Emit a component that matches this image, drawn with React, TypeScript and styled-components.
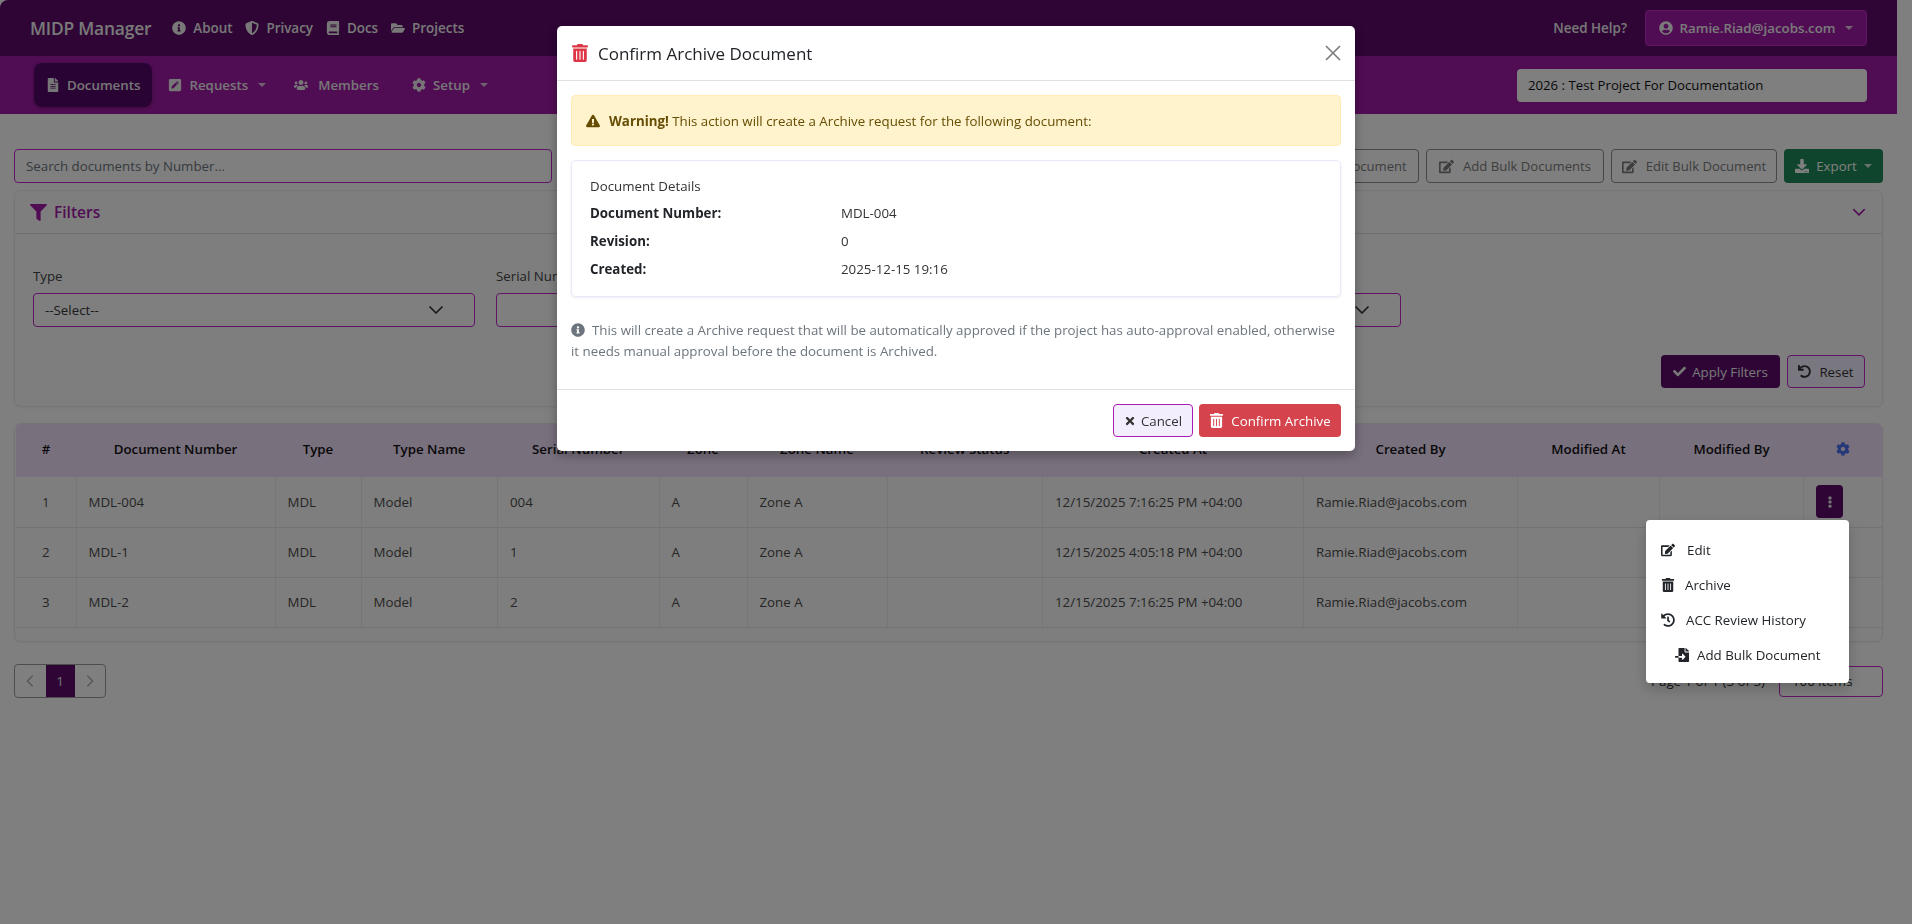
import React from "react";
import styled, { createGlobalStyle } from "styled-components";
import {
  FaInfoCircle, FaShieldAlt, FaBook, FaFolderOpen, FaFileAlt, FaPenSquare, FaUsers, FaCog,
  FaUserCircle, FaFilter, FaDownload, FaEdit, FaTrashAlt, FaExclamationTriangle, FaTimes,
  FaCheck, FaUndo, FaEllipsisV, FaHistory, FaFileImport,
} from "react-icons/fa";

const FONT = `"Open Sans", "Noto Sans", "Liberation Sans", sans-serif`;
const PURPLE = "#a31aa8";
const DARK = "#5c0a6a";
const LINE = "#c227cc";

const Global = createGlobalStyle`
  html, body { margin: 0; padding: 0; height: 100%; overflow: hidden; background: #fff; }
  body { font-family: ${FONT}; font-size: 13.3px; color: #212529; }
  * { box-sizing: border-box; }
  svg { height: 1em; width: auto; flex: none; }
`;

const Page = styled.div`
  width: 1897px;
  height: 924px;
`;
const TopBar = styled.header`
  height: 56px;
  background: ${DARK};
  border-top-left-radius: 8px;
  display: flex;
  align-items: center;
  padding: 0 30px;
`;
const Brand = styled.span`
  font-size: 17.4px;
  font-weight: 600;
  color: #f2f2f2;
  letter-spacing: -0.2px;
  margin-right: 21px;
`;
const TopLink = styled.a`
  display: flex;
  align-items: center;
  gap: 7px;
  color: #f0f0f0;
  font-size: 13.4px;
  font-weight: 600;
  margin-right: 13px;
  svg { font-size: 14px; }
`;
const Spacer = styled.div`flex: 1;`;
const Help = styled.span`
  color: #f0f0f0;
  font-weight: 600;
  font-size: 13.4px;
  margin-right: 18px;
`;
const UserButton = styled.button`
  width: 222px;
  height: 36px;
  border: 1px solid #c22cc9;
  border-radius: 4px;
  background: ${PURPLE};
  color: #f4f4f4;
  font: 600 13.3px ${FONT};
  display: flex;
  align-items: center;
  justify-content: center;
  gap: 7px;
  svg { font-size: 14px; }
`;
const Caret = styled.i<{ $ml?: number }>`
  width: 0;
  height: 0;
  border-left: 4px solid transparent;
  border-right: 4px solid transparent;
  border-top: 4px solid currentColor;
  margin-left: ${(p) => p.$ml ?? 3}px;
  opacity: .8;
`;
const SubBar = styled.nav`
  height: 58px;
  background: ${PURPLE};
  display: flex;
  align-items: center;
  padding: 0 30px 0 34px;
`;
const NavItem = styled.a<{ $active?: boolean; $gap?: number; $mr?: number }>`
  height: 44px;
  padding: 0 12px;
  margin-right: ${(p) => p.$mr ?? 4}px;
  display: flex;
  align-items: center;
  gap: ${(p) => p.$gap ?? 7}px;
  border-radius: 8px;
  color: #ececec;
  font-weight: 600;
  font-size: 13.3px;
  background: ${(p) => (p.$active ? "#54066a" : "transparent")};
  box-shadow: ${(p) => (p.$active ? "0 1px 4px rgba(0,0,0,.3)" : "none")};
  svg { font-size: 14px; }
`;
const ProjectSelect = styled.div`
  width: 350px;
  height: 33px;
  background: #fff;
  border-radius: 4px;
  padding: 0 11px;
  display: flex;
  align-items: center;
  font-size: 13.2px;
  color: #111;
`;
const Main = styled.main`
  padding: 35px 14px 0;
`;
const Toolbar = styled.div`
  display: flex;
  align-items: stretch;
  height: 34px;
  gap: 7px;
  margin-bottom: 7px;
`;
const Search = styled.div`
  width: 538px;
  border: 1px solid ${LINE};
  border-radius: 4px;
  background: #fff;
  color: #6c757d;
  padding: 0 11px;
  display: flex;
  align-items: center;
`;
const ToolButtons = styled.div`
  margin-left: auto;
  display: flex;
  gap: 7px;
`;
const OutlineBtn = styled.button<{ $w: number }>`
  width: ${(p) => p.$w}px;
  border: 1px solid #8a8f94;
  border-radius: 4px;
  background: transparent;
  color: #7c7c7c;
  font: 400 13.1px ${FONT};
  display: flex;
  align-items: center;
  justify-content: center;
  gap: 9px;
  svg { font-size: 15px; }
`;
const ExportBtn = styled.button`
  width: 99px;
  border: 0;
  border-radius: 4px;
  background: #1f8a5a;
  color: #fff;
  font: 400 13.3px ${FONT};
  display: flex;
  align-items: center;
  justify-content: center;
  gap: 7px;
  svg { font-size: 14px; }
`;
const Card = styled.section`
  background: #fcfcfc;
  border: 1px solid #efe6f4;
  border-radius: 7px;
  box-shadow: 0 1px 3px rgba(0,0,0,.06);
`;
const FilterHead = styled.div`
  height: 43px;
  border-bottom: 1px solid #e4dcea;
  display: flex;
  align-items: center;
  justify-content: space-between;
  padding: 0 15px;
  color: ${PURPLE};
  > svg { width: 14px; height: 10.5px; margin-right: 1px; }
`;
const FilterTitle = styled.span`
  display: flex;
  align-items: center;
  gap: 7px;
  font-size: 15.5px;
  font-weight: 600;
  svg { font-size: 17px; }
`;
const FilterBody = styled.div`
  height: 172px;
  padding: 33px 18px 0;
`;
const FilterGrid = styled.div`
  display: grid;
  grid-template-columns: repeat(4, 442px);
  column-gap: 21px;
`;
const Field = styled.label`
  display: flex;
  flex-direction: column;
  gap: 8px;
  color: #444;
  line-height: 18px;
`;
const SelectBox = styled.div`
  height: 34px;
  border: 1px solid ${LINE};
  border-radius: 4px;
  background: #fff;
  display: flex;
  align-items: center;
  justify-content: space-between;
  padding: 0 30px 0 11px;
  color: #333;
`;
const ChevronIcon = styled.svg`
  width: 16px;
  height: 12px;
  fill: none;
  stroke: currentColor;
  stroke-width: 1.7;
  stroke-linecap: round;
  stroke-linejoin: round;
`;
const FilterActions = styled.div`
  display: flex;
  justify-content: flex-end;
  gap: 7px;
  margin-top: 28px;
  margin-right: -1px;
`;
const ApplyBtn = styled.button`
  width: 119px;
  height: 33px;
  border: 0;
  border-radius: 4px;
  background: ${DARK};
  color: #f0f0f0;
  font: 400 13.3px ${FONT};
  display: flex;
  align-items: center;
  justify-content: center;
  gap: 6px;
  svg { font-size: 13px; }
`;
const ResetBtn = styled.button`
  width: 78px;
  height: 33px;
  border: 1px solid ${LINE};
  border-radius: 4px;
  background: #f3eefe;
  color: #333;
  font: 400 13.3px ${FONT};
  display: flex;
  align-items: center;
  justify-content: center;
  gap: 8px;
  svg { font-size: 13px; }
`;
const TableCard = styled(Card)`
  margin-top: 16px;
  height: 219px;
  overflow: hidden;
  padding: 0 1px;
`;
const Table = styled.table`
  width: 100%;
  border-collapse: collapse;
  table-layout: fixed;
`;
const Th = styled.th`
  height: 53px;
  padding: 0 0 4px;
  background: #f0e0fa;
  font-weight: 600;
  color: #111;
  text-align: center;
  font-size: 13.3px;
  svg { color: #4a70f0; font-size: 14px; vertical-align: -2px; }
`;
const Td = styled.td<{ $center?: boolean }>`
  height: 50px;
  padding: 0 12px;
  border-right: 1px solid #ececec;
  border-bottom: 1px solid #e6e6e6;
  color: #4c4c4c;
  text-align: ${(p) => (p.$center ? "center" : "left")};
  &:last-child { border-right: 0; }
`;
const DotsBtn = styled.button`
  width: 27px;
  height: 33px;
  border: 0;
  border-radius: 4px;
  background: ${DARK};
  color: #e4e4e4;
  display: inline-flex;
  align-items: center;
  justify-content: center;
  font-size: 12px;
  padding: 0;
  vertical-align: middle;
`;
const Footer = styled.div`
  display: flex;
  justify-content: space-between;
  align-items: center;
  margin-top: 22px;
  height: 34px;
`;
const Pager = styled.div`
  display: flex;
  height: 34px;
  width: 92px;
  border: 1px solid #9a9a9a;
  border-radius: 4px;
  overflow: hidden;
  color: #a8a8a8;
`;
const PageArrow = styled.div`
  flex: 1;
  display: flex;
  align-items: center;
  justify-content: center;
  svg { width: 14px; height: 14px; }
`;
const PageNum = styled.div`
  width: 29px;
  background: ${DARK};
  color: #e8e8e8;
  display: flex;
  align-items: center;
  justify-content: center;
`;
const PageInfo = styled.div`
  display: flex;
  align-items: center;
  gap: 14px;
  color: #333;
`;
const SizeSelect = styled.div`
  width: 104px;
  height: 31px;
  border: 1px solid ${LINE};
  border-radius: 4px;
  background: #fff;
  padding: 0 12px;
  display: flex;
  align-items: center;
`;

const Backdrop = styled.div`
  position: fixed;
  inset: 0;
  background: rgba(0,0,0,.5);
  display: flex;
  justify-content: center;
  align-items: flex-start;
  padding-top: 26px;
`;
const Modal = styled.div`
  width: 798px;
  height: 425px;
  background: #fff;
  border-radius: 5px;
  display: flex;
  flex-direction: column;
  box-shadow: 0 4px 12px rgba(0,0,0,.3);
`;
const ModalHead = styled.div`
  height: 55px;
  border-bottom: 1px solid #dee2e6;
  display: flex;
  align-items: center;
  justify-content: space-between;
  padding: 0 14px;
`;
const ModalTitle = styled.h5`
  margin: 0;
  display: flex;
  align-items: center;
  gap: 9px;
  font-size: 17px;
  font-weight: 500;
  color: #212529;
  svg { color: #dc3545; font-size: 18px; }
`;
const Close = styled.div`
  color: #7b7b7b;
  display: flex;
  svg { width: 16px; height: 16px; }
`;
const ModalBody = styled.div`
  flex: 1;
  padding: 14px;
  display: flex;
  flex-direction: column;
`;
const Alert = styled.div`
  height: 51px;
  background: #fff3cd;
  border: 1px solid #ffecb5;
  border-radius: 4px;
  color: #664d03;
  display: flex;
  align-items: center;
  padding: 0 14px;
  gap: 9px;
  b { font-weight: 700; }
  svg { font-size: 14px; }
`;
const DetailCard = styled.div`
  margin-top: 14px;
  height: 137px;
  border: 1px solid #e8e6fa;
  border-radius: 5px;
  box-shadow: 0 1px 3px rgba(0,0,0,.08);
  padding: 13px 18px;
`;
const DetailTitle = styled.div`
  font-weight: 500;
  line-height: 25px;
  color: #333;
`;
const DetailRow = styled.div`
  display: grid;
  grid-template-columns: 251px 1fr;
  line-height: 28px;
  color: #333;
  b { font-weight: 700; color: #212529; }
`;
const Note = styled.p`
  margin: 23px 0 0;
  color: #6c757d;
  line-height: 21px;
  svg { vertical-align: -2px; margin-right: 7px; font-size: 14px; }
`;
const ModalFoot = styled.div`
  height: 62px;
  border-top: 1px solid #dee2e6;
  display: flex;
  justify-content: flex-end;
  align-items: center;
  gap: 6px;
  padding: 0 14px;
`;
const CancelBtn = styled.button`
  width: 80px;
  height: 33px;
  border: 1px solid #a91db6;
  border-radius: 4px;
  background: #f3eefe;
  color: #333;
  font: 400 13.3px ${FONT};
  display: flex;
  align-items: center;
  justify-content: center;
  gap: 5px;
  svg { font-size: 12px; }
`;
const DangerBtn = styled.button`
  width: 142px;
  height: 33px;
  border: 0;
  border-radius: 4px;
  background: #d5434d;
  color: #fff;
  font: 400 13.3px ${FONT};
  display: flex;
  align-items: center;
  justify-content: center;
  gap: 7px;
  svg { font-size: 15px; }
`;
const Menu = styled.div`
  position: fixed;
  left: 1646px;
  top: 520px;
  width: 203px;
  height: 163px;
  background: #fff;
  border-radius: 4px;
  box-shadow: 0 6px 14px rgba(0,0,0,.2);
  padding: 13px 0 11px;
  display: flex;
  flex-direction: column;
`;
const MenuItem = styled.div<{ $gap: number; $indent?: number }>`
  height: 35px;
  display: flex;
  align-items: center;
  padding-left: ${(p) => p.$indent ?? 15}px;
  gap: ${(p) => p.$gap}px;
  color: #212529;
  svg { font-size: 14px; }
`;

const ChevLeft = () => <svg viewBox="0 0 16 16" fill="none" stroke="currentColor" strokeWidth="1.4"><path d="M11 2 5 8l6 6" /></svg>;
const ChevRight = () => <svg viewBox="0 0 16 16" fill="none" stroke="currentColor" strokeWidth="1.4"><path d="m5 2 6 6-6 6" /></svg>;
const XMark = () => <svg viewBox="0 0 16 16" fill="none" stroke="currentColor" strokeWidth="1.6"><path d="m1 1 14 14M15 1 1 15" /></svg>;
const Chevron = () => <ChevronIcon viewBox="0 0 16 12"><path d="m2 3 6 6 6-6" /></ChevronIcon>;

const widths = [60, 199, 86, 136.5, 161.5, 88, 140, 155.5, 261, 214, 142, 144, 78];
const headers = ["#", "Document Number", "Type", "Type Name", "Serial Number", "Zone", "Zone Name", "Review Status", "Created At", "Created By", "Modified At", "Modified By"];
const rows = [
  ["1", "MDL-004", "004", "12/15/2025 7:16:25 PM +04:00"],
  ["2", "MDL-1", "1", "12/15/2025 4:05:18 PM +04:00"],
  ["3", "MDL-2", "2", "12/15/2025 7:16:25 PM +04:00"],
];

export default function App() {
  return (
    <>
      <Global />
      <Page>
        <TopBar>
          <Brand>MIDP Manager</Brand>
          <TopLink><FaInfoCircle />About</TopLink>
          <TopLink><FaShieldAlt />Privacy</TopLink>
          <TopLink><FaBook />Docs</TopLink>
          <TopLink><FaFolderOpen />Projects</TopLink>
          <Spacer />
          <Help>Need Help?</Help>
          <UserButton><FaUserCircle />Ramie.Riad@jacobs.com<Caret /></UserButton>
        </TopBar>
        <SubBar>
          <NavItem $active><FaFileAlt />Documents</NavItem>
          <NavItem><FaPenSquare />Requests<Caret /></NavItem>
          <NavItem $gap={10} $mr={9}><FaUsers />Members</NavItem>
          <NavItem><FaCog />Setup<Caret /></NavItem>
          <Spacer />
          <ProjectSelect>2026 : Test Project For Documentation</ProjectSelect>
        </SubBar>
        <Main>
          <Toolbar>
            <Search>Search documents by Number...</Search>
            <ToolButtons>
              <OutlineBtn $w={140}><FaEdit />Add Document</OutlineBtn>
              <OutlineBtn $w={178}><FaEdit />Add Bulk Documents</OutlineBtn>
              <OutlineBtn $w={166}><FaEdit />Edit Bulk Document</OutlineBtn>
              <ExportBtn><FaDownload />Export<Caret $ml={0} /></ExportBtn>
            </ToolButtons>
          </Toolbar>
          <Card>
            <FilterHead>
              <FilterTitle><FaFilter />Filters</FilterTitle>
              <Chevron />
            </FilterHead>
            <FilterBody>
              <FilterGrid>
                <Field>Type<SelectBox><span>--Select--</span><Chevron /></SelectBox></Field>
                <Field>Serial Number<SelectBox><span /><Chevron /></SelectBox></Field>
                <Field>Zone<SelectBox><span /><Chevron /></SelectBox></Field>
              </FilterGrid>
              <FilterActions>
                <ApplyBtn><FaCheck />Apply Filters</ApplyBtn>
                <ResetBtn><FaUndo />Reset</ResetBtn>
              </FilterActions>
            </FilterBody>
          </Card>
          <TableCard>
            <Table>
              <colgroup>{widths.map((w, i) => <col key={i} style={{ width: w }} />)}</colgroup>
              <thead>
                <tr>
                  {headers.map((h) => <Th key={h}>{h}</Th>)}
                  <Th><FaCog /></Th>
                </tr>
              </thead>
              <tbody>
                {rows.map((r, i) => (
                  <tr key={r[0]}>
                    <Td $center>{r[0]}</Td>
                    <Td>{r[1]}</Td>
                    <Td>MDL</Td>
                    <Td>Model</Td>
                    <Td>{r[2]}</Td>
                    <Td>A</Td>
                    <Td>Zone A</Td>
                    <Td />
                    <Td>{r[3]}</Td>
                    <Td>Ramie.Riad@jacobs.com</Td>
                    <Td />
                    <Td />
                    <Td>{i === 0 && <DotsBtn><FaEllipsisV /></DotsBtn>}</Td>
                  </tr>
                ))}
              </tbody>
            </Table>
          </TableCard>
          <Footer>
            <Pager>
              <PageArrow><ChevLeft /></PageArrow>
              <PageNum>1</PageNum>
              <PageArrow><ChevRight /></PageArrow>
            </Pager>
            <PageInfo>
              Page 1 of 1 (3 of 3)
              <SizeSelect>100 items</SizeSelect>
            </PageInfo>
          </Footer>
        </Main>
      </Page>
      <Backdrop>
        <Modal>
          <ModalHead>
            <ModalTitle><FaTrashAlt />Confirm Archive Document</ModalTitle>
            <Close><XMark /></Close>
          </ModalHead>
          <ModalBody>
            <Alert><FaExclamationTriangle /><span><b>Warning!</b> This action will create a Archive request for the following document:</span></Alert>
            <DetailCard>
              <DetailTitle>Document Details</DetailTitle>
              <DetailRow><b>Document Number:</b><span>MDL-004</span></DetailRow>
              <DetailRow><b>Revision:</b><span>0</span></DetailRow>
              <DetailRow><b>Created:</b><span>2025-12-15 19:16</span></DetailRow>
            </DetailCard>
            <Note><FaInfoCircle />This will create a Archive request that will be automatically approved if the project has auto-approval enabled, otherwise it needs manual approval before the document is Archived.</Note>
          </ModalBody>
          <ModalFoot>
            <CancelBtn><FaTimes />Cancel</CancelBtn>
            <DangerBtn><FaTrashAlt />Confirm Archive</DangerBtn>
          </ModalFoot>
        </Modal>
      </Backdrop>
      <Menu>
        <MenuItem $gap={12}><FaEdit />Edit</MenuItem>
        <MenuItem $gap={10}><FaTrashAlt />Archive</MenuItem>
        <MenuItem $gap={11}><FaHistory />ACC Review History</MenuItem>
        <MenuItem $gap={8} $indent={29}><FaFileImport />Add Bulk Document</MenuItem>
      </Menu>
    </>
  );
}
